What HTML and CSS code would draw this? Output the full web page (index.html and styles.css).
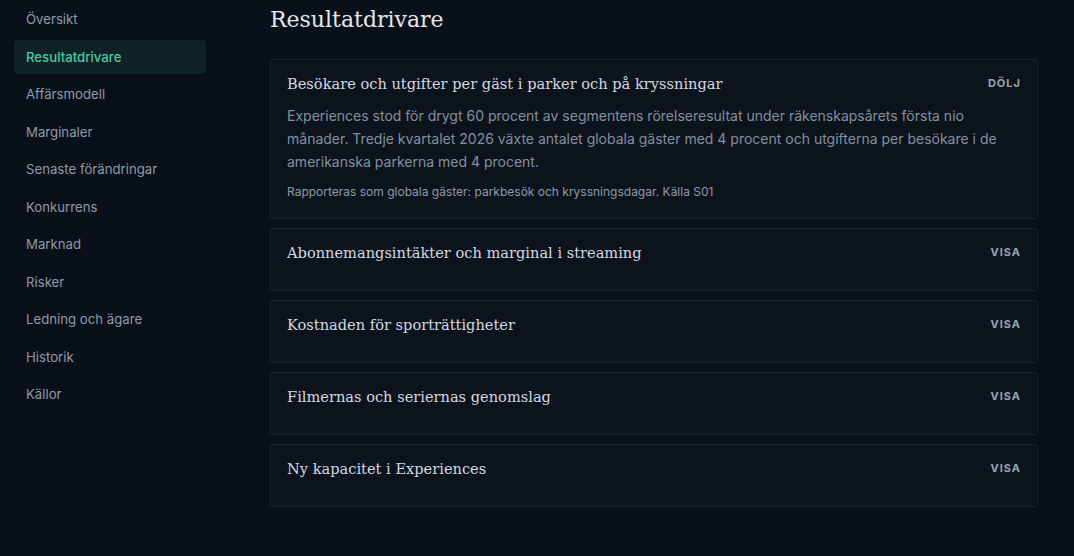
FILE: index.html
```html
<!DOCTYPE html>
<html lang="sv">
<head>
<meta charset="utf-8">
<title>Resultatdrivare</title>
<link rel="stylesheet" href="styles.css">
</head>
<body>
<div class="layout">
  <nav class="sidebar">
    <a class="nav-item">Översikt</a>
    <a class="nav-item active">Resultatdrivare</a>
    <a class="nav-item">Affärsmodell</a>
    <a class="nav-item">Marginaler</a>
    <a class="nav-item">Senaste förändringar</a>
    <a class="nav-item">Konkurrens</a>
    <a class="nav-item">Marknad</a>
    <a class="nav-item">Risker</a>
    <a class="nav-item">Ledning och ägare</a>
    <a class="nav-item">Historik</a>
    <a class="nav-item">Källor</a>
  </nav>
  <main class="main">
    <h1 class="page-title">Resultatdrivare</h1>
    <div class="cards">
      <section class="card open">
        <div class="card-head">
          <h2 class="card-title">Besökare och utgifter per gäst i parker och på kryssningar</h2>
          <span class="toggle">DÖLJ</span>
        </div>
        <p class="card-text">Experiences stod för drygt 60 procent av segmentens rörelseresultat under räkenskapsårets första nio månader. Tredje kvartalet 2026 växte antalet globala gäster med 4 procent och utgifterna per besökare i de amerikanska parkerna med 4 procent.</p>
        <p class="card-note">Rapporteras som globala gäster: parkbesök och kryssningsdagar. Källa S01</p>
      </section>
      <section class="card">
        <div class="card-head">
          <h2 class="card-title">Abonnemangsintäkter och marginal i streaming</h2>
          <span class="toggle">VISA</span>
        </div>
      </section>
      <section class="card">
        <div class="card-head">
          <h2 class="card-title">Kostnaden för sporträttigheter</h2>
          <span class="toggle">VISA</span>
        </div>
      </section>
      <section class="card">
        <div class="card-head">
          <h2 class="card-title">Filmernas och seriernas genomslag</h2>
          <span class="toggle">VISA</span>
        </div>
      </section>
      <section class="card">
        <div class="card-head">
          <h2 class="card-title">Ny kapacitet i Experiences</h2>
          <span class="toggle">VISA</span>
        </div>
      </section>
    </div>
  </main>
</div>
</body>
</html>
```

FILE: styles.css
```css
* { box-sizing: border-box; }
html, body {
  margin: 0;
  padding: 0;
  background: #0a1019;
  height: 100%;
}
body {
  font-family: Inter, "Noto Sans", sans-serif;
  color: #c9d1da;
}
.layout {
  display: flex;
  align-items: flex-start;
}
.sidebar {
  width: 220px;
  flex: none;
  padding: 2px 14px 0 14px;
  display: flex;
  flex-direction: column;
  gap: 3.5px;
}
.nav-item {
  display: block;
  height: 34px;
  line-height: 34px;
  padding: 0 12px;
  font-size: 13.2px;
  color: #8e9aa8;
  border-radius: 4px;
  width: 192px;
}
.nav-item.active {
  background: #0f2226;
  color: #4cc9a0;
  font-weight: 500;
}
.main {
  flex: 1;
  padding: 0 36px 0 50px;
}
.page-title {
  margin: 0;
  padding-top: 2px;
  font-family: "DejaVu Serif", "Liberation Serif", serif;
  font-weight: 400;
  font-size: 22px;
  line-height: 36px;
  color: #e3e7ec;
}
.cards {
  margin-top: 21px;
  display: flex;
  flex-direction: column;
  gap: 9px;
  width: 768px;
}
.card {
  background: #0d131c;
  border: 1px solid #1a222d;
  border-radius: 3px;
  padding: 9px 16px 24px 16px;
}
.card.open {
  padding-top: 9px;
  padding-bottom: 17px;
}
.card-head {
  display: flex;
  justify-content: space-between;
  align-items: center;
  height: 28px;
}
.card-title {
  margin: 0;
  font-family: "DejaVu Serif", "Liberation Serif", serif;
  font-weight: 400;
  font-size: 14.6px;
  color: #d3d9e0;
}
.toggle {
  font-size: 11px;
  font-weight: 700;
  letter-spacing: 1px;
  color: #98a4b1;
}
.card-text {
  margin: 7px 0 0 0;
  font-size: 14px;
  line-height: 23px;
  color: #8390a0;
}
.card-note {
  margin: 10px 0 0 0;
  font-size: 12px;
  line-height: 18px;
  color: #8f9aa7;
}
```
